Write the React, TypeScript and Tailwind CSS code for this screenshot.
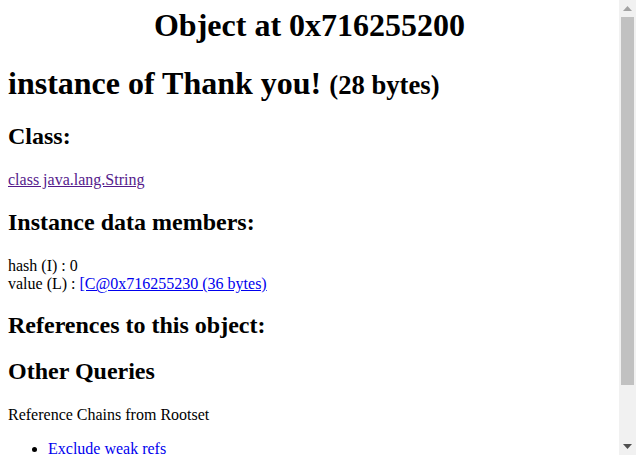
// jhat-style object detail page with a static scrollbar on the right.
const serif = { fontFamily: '"Liberation Serif", "Times New Roman", serif' };

function Scrollbar() {
  return (
    <div className="w-[17px] h-[455px] bg-[#f1f1f1] flex flex-col items-center shrink-0">
      <div className="h-[17px] w-full flex items-center justify-center">
        <svg width="9" height="5" viewBox="0 0 9 5">
          <path d="M0 5 L4.5 0 L9 5 Z" fill="#a3a3a3" />
        </svg>
      </div>
      <div className="w-[13px] h-[368px] bg-[#c1c1c1]" />
      <div className="flex-1" />
      <div className="h-[17px] w-full flex items-center justify-center">
        <svg width="9" height="5" viewBox="0 0 9 5">
          <path d="M0 0 L9 0 L4.5 5 Z" fill="#505050" />
        </svg>
      </div>
    </div>
  );
}

export default function App() {
  return (
    <div className="flex w-[636px] h-[455px] bg-white overflow-hidden">
      <div
        className="flex-1 h-[455px] overflow-hidden px-2 text-black text-[16px] leading-[1.15]"
        style={serif}
      >
        <h1 className="text-[32px] font-bold text-center mt-[7px] mb-[21.44px]">
          Object at 0x716255200
        </h1>
        <h1 className="text-[32px] font-bold mb-[21.44px]">
          instance of Thank you! <span className="text-[26.67px]">(28 bytes)</span>
        </h1>
        <h2 className="text-[24px] font-bold mb-[19.92px]">Class:</h2>
        <a href="#" className="text-[#551a8b] underline">
          class java.lang.String
        </a>
        <h2 className="text-[24px] font-bold my-[19.92px]">Instance data members:</h2>
        <div>hash (I) : 0</div>
        <div>
          value (L) :{' '}
          <a href="#" className="text-[#0000ee] underline">
            [C@0x716255230 (36 bytes)
          </a>
        </div>
        <h2 className="text-[24px] font-bold mt-[18px] mb-[19px]">References to this object:</h2>
        <h2 className="text-[24px] font-bold mb-[19.92px]">Other Queries</h2>
        <div>Reference Chains from Rootset</div>
        <ul className="list-disc pl-10 mt-4">
          <li>
            <a href="#" className="text-[#0000ee]">
              Exclude weak refs
            </a>
          </li>
          <li>
            <a href="#" className="text-[#0000ee]">
              Include weak refs
            </a>
          </li>
        </ul>
      </div>
      <Scrollbar />
    </div>
  );
}
